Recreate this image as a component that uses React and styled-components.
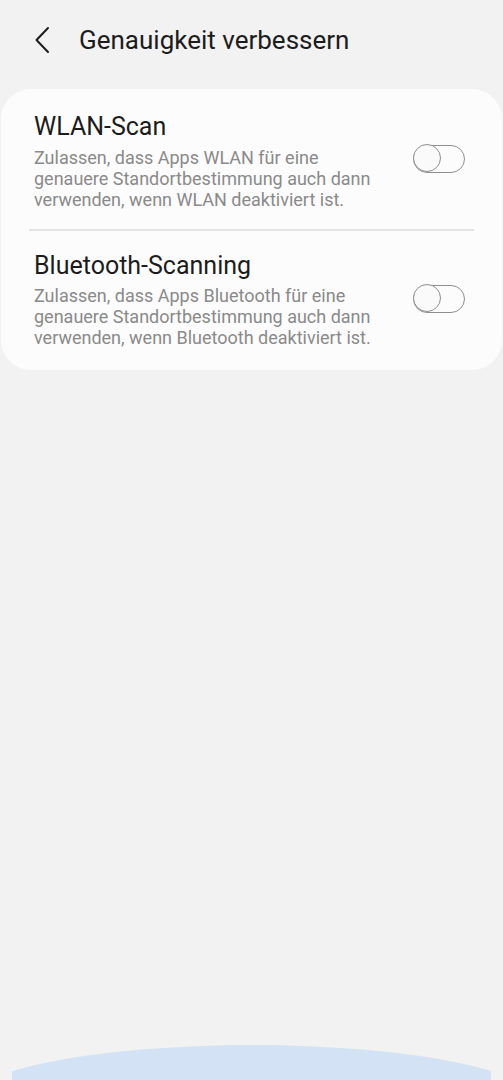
import React, { useState } from "react";
import styled, { createGlobalStyle } from "styled-components";

const GlobalStyle = createGlobalStyle`
  html, body {
    margin: 0;
    padding: 0;
    background: #f2f2f2;
    font-family: Roboto, "Noto Sans", sans-serif;
  }
`;

const Screen = styled.div`
  position: relative;
  width: 503px;
  height: 1080px;
  overflow: hidden;
  background: #f2f2f2;
`;

const Header = styled.header`
  display: flex;
  align-items: center;
  height: 80px;
  padding-left: 33px;
  gap: 28px;
`;

const BackButton = styled.button`
  display: flex;
  align-items: center;
  justify-content: center;
  width: 18px;
  height: 40px;
  padding: 0;
  border: none;
  background: transparent;
  cursor: pointer;
`;

const Title = styled.h1`
  margin: 0;
  font-size: 26px;
  font-weight: 400;
  color: #1c1c1c;
`;

const Card = styled.section`
  margin: 9px 1px 0;
  background: #fcfcfc;
  border-radius: 30px;
  padding: 0 28px;
`;

const Item = styled.div`
  display: flex;
  align-items: center;
  padding: ${(p) => (p.$first ? "23px 0 19px 5px" : "20px 0 22px 5px")};
  border-top: ${(p) => (p.$first ? "none" : "2px solid #e3e3e3")};
`;

const TextCol = styled.div`
  flex: 1;
  max-width: 352px;
`;

const ItemTitle = styled.div`
  font-size: 25px;
  line-height: 30px;
  color: #1c1c1c;
`;

const ItemDesc = styled.div`
  margin-top: 4.5px;
  font-size: 18px;
  line-height: 21px;
  color: #8a8a8a;
`;

const Switch = styled.button`
  position: relative;
  flex: none;
  width: 52px;
  height: 28px;
  margin: 0 9px ${(p) => (p.$lift ? "4px" : "0")} auto;
  padding: 0;
  border: 1.5px solid #8f8f8f;
  border-radius: 15px;
  background: transparent;
  cursor: pointer;

  &::after {
    content: "";
    position: absolute;
    top: -2px;
    left: ${(p) => (p.$on ? "22px" : "-1.5px")};
    width: 26px;
    height: 26px;
    border: 1.5px solid #8f8f8f;
    border-radius: 50%;
    background: #fafafa;
  }
`;

const BottomGlow = styled.div`
  position: absolute;
  left: 12px;
  right: 12px;
  top: 1045px;
  height: 60px;
  overflow: hidden;

  &::before {
    content: "";
    position: absolute;
    top: 0;
    left: 50%;
    width: 580px;
    height: 120px;
    margin-left: -290px;
    border-radius: 50%;
    background: #d3e3f5;
  }
`;

const items = [
  {
    title: "WLAN-Scan",
    desc: "Zulassen, dass Apps WLAN für eine genauere Standortbestimmung auch dann verwenden, wenn WLAN deaktiviert ist.",
  },
  {
    title: "Bluetooth-Scanning",
    desc: "Zulassen, dass Apps Bluetooth für eine genauere Standortbestimmung auch dann verwenden, wenn Bluetooth deaktiviert ist.",
  },
];

export default function App() {
  const [state, setState] = useState([false, false]);

  return (
    <Screen>
      <GlobalStyle />
      <Header>
        <BackButton aria-label="Zurück">
          <svg width="18" height="28" viewBox="0 0 18 28" fill="none">
            <path d="M15 2 L3.5 14 L15 26" stroke="#1c1c1c" strokeWidth="2" strokeLinecap="round" strokeLinejoin="round" />
          </svg>
        </BackButton>
        <Title>Genauigkeit verbessern</Title>
      </Header>
      <Card>
        {items.map((it, i) => (
          <Item key={it.title} $first={i === 0}>
            <TextCol>
              <ItemTitle>{it.title}</ItemTitle>
              <ItemDesc>{it.desc}</ItemDesc>
            </TextCol>
            <Switch
              $on={state[i]}
              $lift={i === 0}
              onClick={() => setState((s) => s.map((v, j) => (j === i ? !v : v)))}
            />
          </Item>
        ))}
      </Card>
      <BottomGlow />
    </Screen>
  );
}
